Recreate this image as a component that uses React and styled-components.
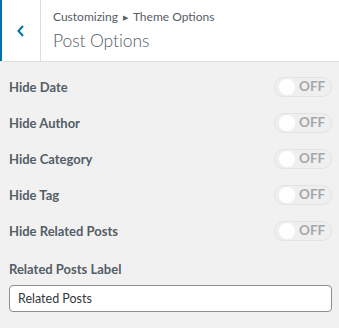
import React from "react";
import styled, { createGlobalStyle } from "styled-components";

const Global = createGlobalStyle`
  html, body { margin: 0; padding: 0; background: #f1f1f1; }
  body { font-family: Lato, "Open Sans", sans-serif; }
  * { box-sizing: border-box; }
`;

const Panel = styled.div`
  width: 339px;
  height: 328px;
  background: #f1f1f1;
  overflow: hidden;
`;

const Header = styled.div`
  display: flex;
  height: 62px;
  background: #fff;
  border-bottom: 1px solid #ddd;
`;

const BackButton = styled.button`
  width: 41px;
  flex: none;
  display: flex;
  align-items: center;
  justify-content: center;
  background: #fff;
  border: none;
  border-left: 2px solid #0073aa;
  border-right: 1px solid #ddd;
  padding: 0;
  color: #0073aa;
`;

const Titles = styled.div`
  display: flex;
  flex-direction: column;
  padding: 7px 0 0 12px;
  color: #555d66;
`;

const Crumb = styled.div`
  font-size: 12px;
  line-height: 20px;
  display: flex;
  align-items: center;
  gap: 5px;
`;

const Arrow = styled.span`
  font-size: 7px;
`;

const Title = styled.div`
  font-size: 17.5px;
  font-weight: 300;
  letter-spacing: -0.1px;
  line-height: 26px;
  margin-top: 1px;
`;

const Body = styled.div`
  padding: 7px 8px 0 9px;
`;

const Row = styled.div`
  height: 36px;
  display: flex;
  align-items: center;
  justify-content: space-between;
`;

const Label = styled.span`
  font-size: 13px;
  font-weight: 700;
  color: #555d66;
`;

const Toggle = styled.div`
  width: 58px;
  height: 20px;
  border: 1px solid #e3e3e3;
  border-radius: 10px;
  background: #efefef;
  display: flex;
  align-items: center;
  padding-left: 4px;
  gap: 4px;
  margin-right: -1px;
`;

const Knob = styled.span`
  width: 16px;
  height: 16px;
  border-radius: 50%;
  background: #fff;
  flex: none;
`;

const ToggleText = styled.span`
  font-size: 13.5px;
  font-weight: 700;
  color: #a7a7a7;
  line-height: 1;
`;

const FieldLabel = styled(Label)`
  display: block;
  line-height: 20px;
  margin-top: 10px;
`;

const Input = styled.input`
  display: block;
  width: 323px;
  height: 27px;
  margin-top: 6px;
  border: 1px solid #8c8f94;
  border-radius: 4px;
  padding: 0 8px;
  font-family: Lato, "Open Sans", sans-serif;
  font-size: 12.5px;
  color: #32373c;
  background: #fff;
`;

const items = ["Hide Date", "Hide Author", "Hide Category", "Hide Tag", "Hide Related Posts"];

export default function App() {
  return (
    <Panel>
      <Global />
      <Header>
        <BackButton aria-label="Back">
          <svg width="10" height="12" viewBox="0 0 10 12">
            <path d="M7 1 L2.5 6 L7 11" fill="none" stroke="#0073aa" strokeWidth="2" />
          </svg>
        </BackButton>
        <Titles>
          <Crumb>
            Customizing <Arrow>▶</Arrow> Theme Options
          </Crumb>
          <Title>Post Options</Title>
        </Titles>
      </Header>
      <Body>
        {items.map((t) => (
          <Row key={t}>
            <Label>{t}</Label>
            <Toggle>
              <Knob />
              <ToggleText>OFF</ToggleText>
            </Toggle>
          </Row>
        ))}
        <FieldLabel>Related Posts Label</FieldLabel>
        <Input defaultValue="Related Posts" />
      </Body>
    </Panel>
  );
}
